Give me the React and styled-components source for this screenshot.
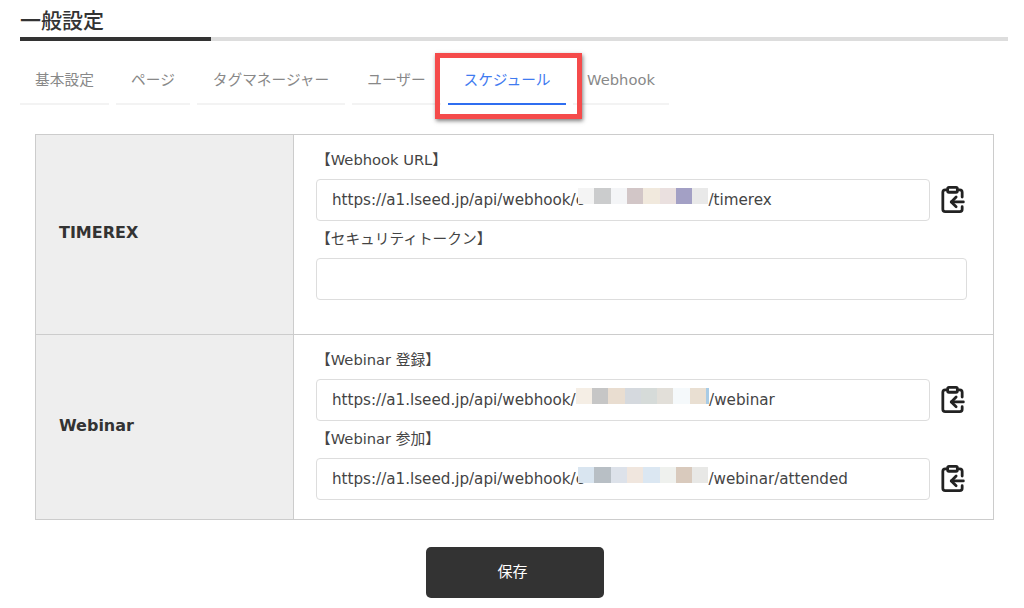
import React from "react";
import styled, { createGlobalStyle } from "styled-components";
import { ClipboardCopy } from "lucide-react";

const GlobalStyle = createGlobalStyle`
  html, body {
    margin: 0;
    padding: 0;
    background: #fff;
    font-family: "DejaVu Sans", "Noto Sans CJK JP", sans-serif;
    color: #333;
  }
`;

const Page = styled.div`
  position: relative;
  width: 1024px;
  height: 608px;
  overflow: hidden;
  padding: 0 16px 0 20px;
  box-sizing: border-box;
`;

const Heading = styled.h2`
  margin: 0;
  height: 37px;
  line-height: 42px;
  font-size: 21px;
  font-weight: 500;
  color: #333;
  border-bottom: 4px solid #ddd;
  position: relative;
  &::after {
    content: "";
    position: absolute;
    left: 0;
    bottom: -4px;
    width: 191px;
    height: 4px;
    background: #333;
  }
`;

const Tabs = styled.ul`
  list-style: none;
  display: flex;
  gap: 7px;
  margin: 20px 0 0;
  padding: 0;
  height: 44px;
`;

const Tab = styled.li`
  box-sizing: border-box;
  width: ${(p) => p.$width}px;
  height: 44px;
  line-height: 38px;
  text-align: center;
  font-size: 14.7px;
  color: ${(p) => (p.$active ? "#3f7bf0" : "#888")};
  border-bottom: 2px solid ${(p) => (p.$active ? "#2f6ef0" : "#f3f3f3")};
`;

const Highlight = styled.div`
  position: absolute;
  left: 435px;
  top: 53px;
  width: 147px;
  height: 66px;
  box-sizing: border-box;
  border: 5px solid #f54b4b;
  box-shadow: 1px 2px 4px rgba(0, 0, 0, 0.5);
`;

const Table = styled.div`
  width: 959px;
  margin: 29px 0 0 15px;
  box-sizing: border-box;
  border: 1px solid #ccc;
`;

const Row = styled.div`
  display: grid;
  grid-template-columns: 258px 1fr;
  height: ${(p) => p.$height}px;
  box-sizing: border-box;
  & + & {
    border-top: 1px solid #ccc;
  }
`;

const RowHead = styled.div`
  display: flex;
  align-items: center;
  padding: 0 0 ${(p) => p.$lift}px 23px;
  background: #eee;
  border-right: 1px solid #ccc;
  font-size: 16px;
  font-weight: 700;
  color: #333;
`;

const RowBody = styled.div`
  padding: 12px 26px 0 22px;
`;

const Label = styled.div`
  height: 24px;
  line-height: 26px;
  font-size: 14.7px;
  color: #444;
`;

const FieldLine = styled.div`
  display: flex;
  align-items: center;
  margin: 8px 0 5px;
`;

const Input = styled.div`
  box-sizing: border-box;
  flex: 1;
  height: 42px;
  display: flex;
  align-items: center;
  padding-left: 15px;
  background: #fff;
  border: 1px solid #ddd;
  border-radius: 4px;
  font-size: 15.2px;
  letter-spacing: -0.02px;
  color: #444;
  white-space: nowrap;
`;

const CopyButton = styled.div`
  flex: none;
  display: flex;
  margin: 0 0 1px 8px;
  color: #222;
`;

const Mosaic = styled.span`
  display: inline-flex;
  height: 16.5px;
  margin: 0 0 8px ${(p) => (p.$covers ? "-6px" : "0")};
`;

const Cell = styled.span`
  display: block;
  width: ${(p) => (p.$sliver ? "3px" : "16.3px")};
  height: 100%;
`;

const Footer = styled.div`
  display: flex;
  justify-content: center;
  margin: 27px 0 0 1px;
`;

const SaveButton = styled.button`
  width: 178px;
  height: 51px;
  border: 0;
  border-radius: 5px;
  padding: 0 4px 4px 0;
  background: #333;
  color: #fff;
  font-family: inherit;
  font-size: 15px;
`;

const tabs = [
  { label: "基本設定", width: 89 },
  { label: "ページ", width: 74 },
  { label: "タグマネージャー", width: 148 },
  { label: "ユーザー", width: 89 },
  { label: "スケジュール", width: 118, active: true },
  { label: "Webhook", width: 96 },
];

const TIMEREX_CELLS = ["#f4f4f4", "#cbcccd", "#f4f5f7", "#d2c6c7", "#f1e9dd", "#eae0df", "#a3a0c5", "#e9e9e9"];
const ENTRY_CELLS = ["#f5eee5", "#c6c6c6", "#e9ddd0", "#d5d9de", "#d6dbd9", "#e2dfd9", "#f5f9fb", "#e9dfd2"];
const ATTENDED_CELLS = ["#d9e5f0", "#b8bfc5", "#dde2ea", "#f0e6de", "#dbe7f2", "#eff1ee", "#d9cabd", "#e8e8e6"];

const Pixels = ({ cells, covers, sliver }) => (
  <Mosaic $covers={covers}>
    {cells.map((color, i) => (
      <Cell key={i} style={{ background: color }} />
    ))}
    {sliver && <Cell $sliver style={{ background: sliver }} />}
  </Mosaic>
);

const UrlField = ({ cells, prefix, sliver, suffix }) => (
  <FieldLine>
    <Input>
      https://a1.lseed.jp/api/webhook/{prefix}
      <Pixels cells={cells} covers={!!prefix} sliver={sliver} />
      {suffix}
    </Input>
    <CopyButton>
      <ClipboardCopy size={29} strokeWidth={2.3} />
    </CopyButton>
  </FieldLine>
);

const App = () => (
  <Page>
    <GlobalStyle />
    <Heading>一般設定</Heading>
    <Tabs>
      {tabs.map((tab) => (
        <Tab key={tab.label} $width={tab.width} $active={tab.active}>
          {tab.label}
        </Tab>
      ))}
    </Tabs>
    <Highlight />
    <Table>
      <Row $height={199}>
        <RowHead $lift={5}>TIMEREX</RowHead>
        <RowBody>
          <Label>【Webhook URL】</Label>
          <UrlField cells={TIMEREX_CELLS} prefix="c" suffix="/timerex" />
          <Label>【セキュリティトークン】</Label>
          <FieldLine>
            <Input />
          </FieldLine>
        </RowBody>
      </Row>
      <Row $height={185}>
        <RowHead $lift={3}>Webinar</RowHead>
        <RowBody>
          <Label>【Webinar 登録】</Label>
          <UrlField cells={ENTRY_CELLS} sliver="#a8cbe5" suffix="/webinar" />
          <Label>【Webinar 参加】</Label>
          <UrlField cells={ATTENDED_CELLS} prefix="c" suffix="/webinar/attended" />
        </RowBody>
      </Row>
    </Table>
    <Footer>
      <SaveButton>保存</SaveButton>
    </Footer>
  </Page>
);

export default App;
